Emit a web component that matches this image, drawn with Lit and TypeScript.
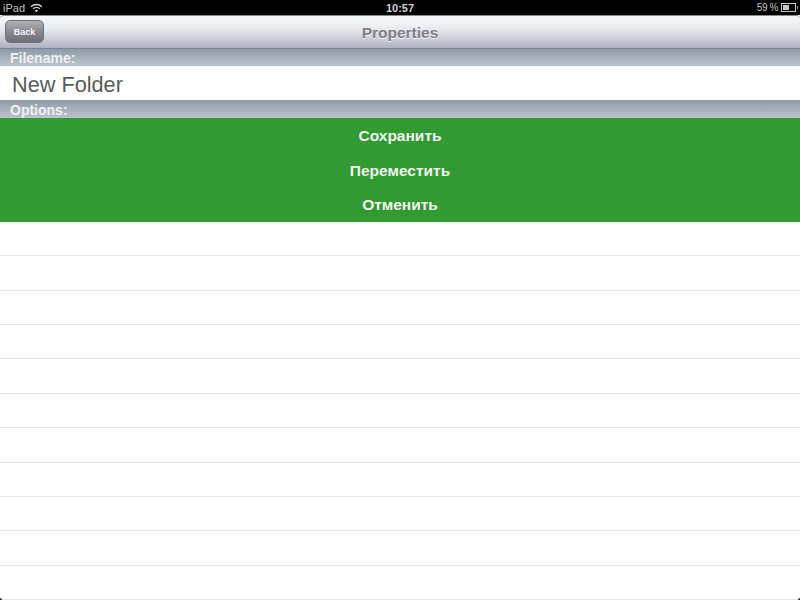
import {LitElement, css, html, svg} from 'lit';
import {customElement} from 'lit/decorators.js';

const wifi = svg`<svg class="wifi" width="13" height="10" viewBox="0 0 14 11">
  <path d="M1 4.2C4.4 .9 9.6 .9 13 4.2" fill="none" stroke="#cfcfcf" stroke-width="1.6"/>
  <path d="M3.2 6.4C5.4 4.3 8.6 4.3 10.8 6.4" fill="none" stroke="#cfcfcf" stroke-width="1.6"/>
  <path d="M5 8.2L7 10.2L9 8.2C7.8 7.1 6.2 7.1 5 8.2Z" fill="#cfcfcf"/>
</svg>`;

@customElement('app-root')
export class AppRoot extends LitElement {
  static styles = css`
    :host {
      display: block;
      position: relative;
      width: 800px;
      height: 600px;
      overflow: hidden;
      background: #fff;
      font-family: "Liberation Sans", Arial, sans-serif;
    }

    .status {
      height: 15px;
      background: #000;
      color: #c4c4c4;
      font-size: 11px;
      line-height: 14px;
      display: grid;
      grid-template-columns: 1fr auto 1fr;
      align-items: center;
      padding: 0 3px 0 3px;
    }

    .status-left {
      display: flex;
      align-items: center;
      gap: 5px;
    }

    .status-right {
      display: flex;
      justify-content: flex-end;
      align-items: center;
      gap: 3px;
      font-size: 10px;
      letter-spacing: -0.4px;
    }

    .clock {
      font-weight: bold;
      font-size: 11px;
      color: #d0d0d0;
    }

    .battery {
      width: 11px;
      height: 5px;
      border: 1px solid #c4c4c4;
      padding: 1px;
      box-sizing: content-box;
      margin-right: 1px;
      position: relative;
    }

    .battery-fill {
      width: 59%;
      height: 100%;
      background: #c4c4c4;
    }

    .battery::after {
      content: '';
      position: absolute;
      right: -3px;
      top: 2px;
      width: 1px;
      height: 3px;
      background: #9a9a9a;
    }

    .nav {
      height: 34px;
      box-sizing: border-box;
      display: flex;
      align-items: center;
      justify-content: center;
      position: relative;
      background: linear-gradient(#f5f6f8 0%, #eceef1 35%, #c6c7d3 78%, #aeafc0 100%);
      border-top: 1px solid #8a8a8a;
      border-bottom: 1px solid #7e8594;
      border-radius: 4px 4px 0 0;
    }

    .back {
      position: absolute;
      left: 5px;
      top: 4px;
      width: 39px;
      height: 23px;
      box-sizing: border-box;
      display: flex;
      align-items: center;
      justify-content: center;
      border: 1px solid #6e7178;
      border-radius: 5px;
      background: linear-gradient(#aeb0b5 0%, #888a91 50%, #6c6f77 100%);
      color: #f4f4f4;
      font-size: 9px;
      font-weight: bold;
    }

    .title {
      color: #7d818c;
      font-size: 15.5px;
      font-weight: bold;
      text-shadow: 0 1px 0 #f2f2f5;
      padding-top: 1px;
    }

    .section {
      box-sizing: border-box;
      padding-left: 10px;
      color: #eef0f2;
      font-size: 14px;
      font-weight: bold;
      display: flex;
      align-items: center;
      background: linear-gradient(#8f9aa6 0%, #a9b2bc 55%, #bcc3cb 100%);
    }

    .section.filename {
      height: 17px;
    }

    .section.options {
      height: 18px;
      padding-top: 1px;
    }

    .name {
      height: 34px;
      box-sizing: border-box;
      padding: 3px 0 0 12px;
      display: flex;
      align-items: center;
      background: #fff;
      color: #5a5a5a;
      font-size: 21.7px;
    }

    .actions {
      height: 104px;
      box-sizing: border-box;
      background: #339933;
      display: grid;
      grid-auto-rows: 34.4px;
      padding-top: 1px;
    }

    .action {
      display: flex;
      align-items: center;
      justify-content: center;
      color: #eef5ee;
      font-size: 15.5px;
      font-weight: bold;
    }

    .rows {
      height: 378px;
      display: grid;
      grid-template-rows: repeat(11, 1fr);
    }

    .row {
      border-bottom: 1px solid #e6e6e6;
    }

    .corner {
      position: absolute;
      bottom: 0;
      width: 3px;
      height: 3px;
    }

    .corner.left {
      left: 0;
      background: radial-gradient(circle at 100% 0, transparent 2.5px, #222 3px);
    }

    .corner.right {
      right: 0;
      background: radial-gradient(circle at 0 0, transparent 2.5px, #222 3px);
    }
  `;

  render() {
    const actions = ['Сохранить', 'Переместить', 'Отменить'];
    return html`
      <div class="status">
        <div class="status-left"><span>iPad</span>${wifi}</div>
        <div class="clock">10:57</div>
        <div class="status-right">
          <span>59 %</span>
          <div class="battery"><div class="battery-fill"></div></div>
        </div>
      </div>
      <div class="nav">
        <div class="back">Back</div>
        <div class="title">Properties</div>
      </div>
      <div class="section filename">Filename:</div>
      <div class="name">New Folder</div>
      <div class="section options">Options:</div>
      <div class="actions">
        ${actions.map((a) => html`<div class="action">${a}</div>`)}
      </div>
      <div class="rows">
        ${Array.from({length: 11}, () => html`<div class="row"></div>`)}
      </div>
      <div class="corner left"></div>
      <div class="corner right"></div>
    `;
  }
}
